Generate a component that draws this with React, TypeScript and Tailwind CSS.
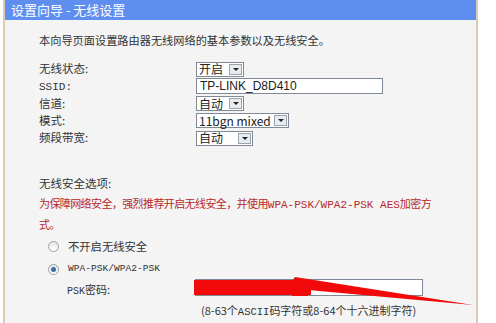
import React from "react";

const cjk = { fontFamily: '"Noto Sans CJK SC", "Noto Sans", sans-serif' };
const mono = { fontFamily: '"Liberation Mono", "Noto Sans CJK SC", monospace' };

function Select({ text, w }: { text: string; w: number }) {
  return (
    <div
      className="flex h-[15px] items-stretch border border-[#7f8a96] bg-white"
      style={{ width: w }}
    >
      <div className="flex flex-1 items-center pl-[2px] text-[12px] leading-none text-[#222]">{text}</div>
      <div className="my-[1px] mr-[1px] flex w-[13px] items-center justify-center border border-[#9aa4ae] bg-[#e9ecef]">
        <div className="h-0 w-0 border-x-[3px] border-t-[3px] border-x-transparent border-t-[#222]" />
      </div>
    </div>
  );
}

function Row({ label, children }: { label: React.ReactNode; children: React.ReactNode }) {
  return (
    <div className="flex h-[17.25px] items-center">
      <div className="w-[157px] text-[11.5px] leading-none text-[#333]">{label}</div>
      {children}
    </div>
  );
}

function Radio({ checked }: { checked?: boolean }) {
  return (
    <div className="flex h-[11px] w-[11px] items-center justify-center rounded-full border border-[#9aa0a8] bg-gradient-to-b from-[#e4e4e4] to-white">
      {checked && <div className="h-[5px] w-[5px] rounded-full bg-[#3a6ea5]" />}
    </div>
  );
}

export default function App() {
  return (
    <div className="relative h-[323px] w-[496px] overflow-hidden bg-white" style={cjk}>
      <div className="ml-[3px] flex h-full w-[475px] flex-col border-x-2 border-[#dccbb2] bg-[#f4f4f4]">
        <div className="flex h-[20px] items-center bg-[#5e8ef0] pl-[6px] text-[13px] text-white">
          设置向导 - 无线设置
        </div>
        <div className="flex flex-col pl-[34px]">
          <div className="mt-[12.5px] text-[11.2px] leading-[15px] text-[#333]">
            本向导页面设置路由器无线网络的基本参数以及无线安全。
          </div>
          <div className="mt-[12.9px] flex flex-col">
            <Row label="无线状态:">
              <Select text="开启" w={48} />
            </Row>
            <Row label={<span style={mono} className="text-[11px]">SSID:</span>}>
              <div className="flex h-[16px] w-[187px] items-center border border-[#7f8a96] bg-white pl-[3px] text-[12px] leading-none text-[#222]" style={{ fontFamily: '"Liberation Sans", sans-serif' }}>
                TP-LINK_D8D410
              </div>
            </Row>
            <Row label="信道:">
              <Select text="自动" w={48} />
            </Row>
            <Row label="模式:">
              <Select text="11bgn mixed" w={93} />
            </Row>
            <Row label="频段带宽:">
              <Select text="自动" w={57} />
            </Row>
          </div>
          <div className="mt-[28.4px] text-[11.5px] leading-[16px] text-[#333]">无线安全选项:</div>
          <div className="mt-[2.5px] text-[11px] leading-[19px] tracking-[-0.6px] text-[#b8282a]">
            为保障网络安全，强烈推荐开启无线安全，并使用<span style={mono} className="text-[11px] tracking-normal">WPA-PSK/WPA2-PSK AES</span>加密方
            <br />
            式。
          </div>
          <div className="ml-[9px] mt-[1.5px] flex h-[23px] items-center gap-[9px]">
            <Radio />
            <span className="text-[11.3px] text-[#333]">不开启无线安全</span>
          </div>
          <div className="ml-[9px] flex h-[23px] items-center gap-[9px]">
            <Radio checked />
            <span style={mono} className="text-[9.6px] text-[#333]">WPA-PSK/WPA2-PSK</span>
          </div>
          <div className="flex h-[18px] items-center">
            <div className="w-[156px] pl-[28px] text-[11px] text-[#333]">
              <span style={mono} className="text-[10px]">PSK</span>密码:
            </div>
            <div className="relative -mt-[5px] h-[17px] w-[228px] border border-[#7f8a96] bg-white">
              <div className="absolute left-[-2px] top-0 h-[15px] w-[117px] bg-[#f20a0a]" />
            </div>
          </div>
          <div className="ml-[162px] mt-[4px] text-[11px] leading-[15px] text-[#333]">
            (8-63个<span style={mono} className="text-[10.5px]">ASCII</span>码字符或8-64个十六进制字符)
          </div>
        </div>
      </div>
      <svg className="pointer-events-none absolute left-0 top-0" width="496" height="323" viewBox="0 0 496 323">
        <polygon points="292,281 295,277 473,305 308,290 308,296 292,296" fill="#f20a0a" />
      </svg>
    </div>
  );
}
